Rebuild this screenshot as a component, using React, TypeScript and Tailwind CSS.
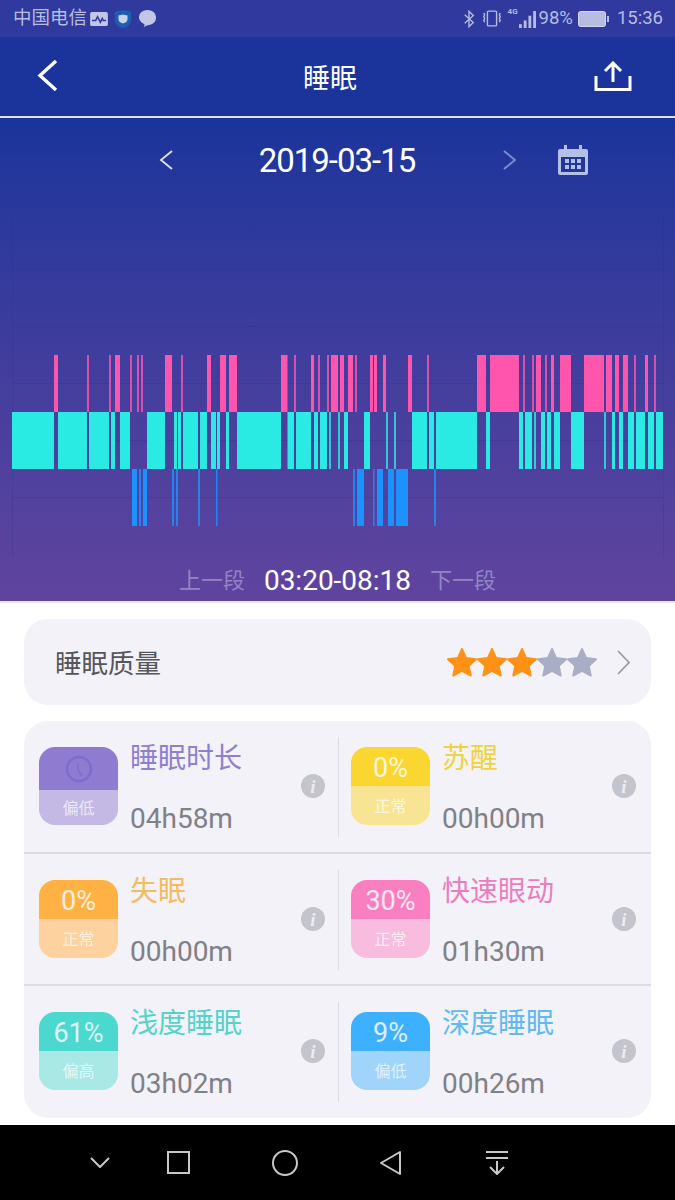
const cjk = "font-['Roboto','Noto_Sans_CJK_SC',sans-serif]";

// [start, end] in page pixels
const remBars = [[54, 58], [87, 89], [109, 111], [115, 120], [130, 132], [137, 139], [141, 143], [165, 172], [181, 183], [207, 211], [220, 226], [229, 237], [281, 287.5], [294, 296], [311, 314], [318, 320], [327, 329], [331, 338], [340, 344], [348, 353], [355, 357], [370, 373], [374, 377], [383, 386], [408, 412], [427, 429], [477, 486], [490, 519], [523, 525], [532, 534], [536, 541], [545, 547], [551, 554], [560, 571], [584, 604], [606, 612], [615, 619], [623, 628], [634, 636], [645, 648], [654, 656]];
const lightBars = [[12, 54], [58, 87], [89, 109], [111, 115], [120, 130], [147, 165], [174, 177], [178, 181], [183, 198], [200, 207], [211, 216], [217, 220], [226, 229], [237, 281], [287.5, 294], [296, 311], [314, 318], [320, 327], [329, 331], [338, 340], [344, 348], [364, 370], [386, 388], [394, 396], [412, 427], [429, 434], [436, 477], [486, 490], [519, 523], [525, 532], [534, 536], [541, 545], [547, 551], [554, 560], [571, 584], [604, 606], [612, 615], [619, 623], [628, 634], [636, 645], [648, 654], [656, 663]];
const deepBars = [[132, 137], [139, 141], [143, 147], [172, 174], [176, 178], [198, 200], [216, 217.5], [353, 355], [357, 364], [373, 374.5], [377, 383], [388, 394], [396, 408], [434, 436]];

type Stat = {
  title: string;
  value: string;
  tag: string;
  pct?: string;
  top: string;
  bottom: string;
  text: string;
};

const stats: Stat[][] = [
  [
    { title: "睡眠时长", value: "04h58m", tag: "偏低", top: "bg-[#8f7bcf] h-[43px]", bottom: "bg-[#c4b9e5]", text: "text-[#8f7fd0]" },
    { title: "苏醒", value: "00h00m", pct: "0%", tag: "正常", top: "bg-[#fbd530] h-[39px]", bottom: "bg-[#f8e594]", text: "text-[#f0d240]" },
  ],
  [
    { title: "失眠", value: "00h00m", pct: "0%", tag: "正常", top: "bg-[#ffb144] h-[39px]", bottom: "bg-[#fdd29e]", text: "text-[#f5bb5e]" },
    { title: "快速眼动", value: "01h30m", pct: "30%", tag: "正常", top: "bg-[#f97fc0] h-[39px]", bottom: "bg-[#f8bcdf]", text: "text-[#ec7cc0]" },
  ],
  [
    { title: "浅度睡眠", value: "03h02m", pct: "61%", tag: "偏高", top: "bg-[#4bd8cf] h-[39px]", bottom: "bg-[#a8e9e6]", text: "text-[#55d2cb]" },
    { title: "深度睡眠", value: "00h26m", pct: "9%", tag: "偏低", top: "bg-[#3db0ff] h-[39px]", bottom: "bg-[#a0d4fb]", text: "text-[#62b8f0]" },
  ],
];

function SleepChart() {
  const thin = (a: number, b: number) => (b - a <= 2 ? 0.8 : 1);
  return (
    <svg width="675" height="345" viewBox="0 215 675 345" className="block">
      {[269, 326, 383, 440, 497].map((y) => (
        <line key={y} x1="12" x2="663" y1={y + 0.5} y2={y + 0.5} stroke="#1a2a8a" strokeOpacity="0.16" />
      ))}
      <line x1="12.5" x2="12.5" y1="215" y2="558" stroke="#1a2a8a" strokeOpacity="0.16" />
      <line x1="663.5" x2="663.5" y1="215" y2="558" stroke="#1a2a8a" strokeOpacity="0.16" />
      {remBars.map(([a, b]) => (
        <rect key={a} x={a} y="355" width={b - a} height="57" fill="#ff55ac" fillOpacity={thin(a, b)} />
      ))}
      {lightBars.map(([a, b]) => (
        <rect key={a} x={a} y="412" width={b - a} height="57" fill="#2aebe3" fillOpacity={thin(a, b)} />
      ))}
      {deepBars.map(([a, b]) => (
        <rect key={a} x={a} y="469" width={b - a} height="57" fill="#1b93ff" fillOpacity={thin(a, b)} />
      ))}
    </svg>
  );
}

function Star({ on }: { on: boolean }) {
  const color = on ? "#ff9116" : "#a9adc5";
  return (
    <svg width="30" height="29" viewBox="0.6 0.8 22.8 22" className="shrink-0">
      <path
        d="M12 1.5l3.2 6.9 7.5.9-5.5 5.1 1.5 7.4L12 18.2l-6.7 3.6 1.5-7.4L1.3 9.3l7.5-.9z"
        fill={color}
        stroke={color}
        strokeWidth="1.4"
        strokeLinejoin="round"
      />
    </svg>
  );
}

function StatCell({ item, first }: { item: Stat; first: boolean }) {
  return (
    <div className={`relative flex items-start h-[100px] mt-[16px] pt-[10px] ${first ? "w-[314px] pl-[15px]" : "flex-1 pl-[12px] border-l border-[#dcdce2]"}`}>
      <div className="w-[79px] h-[78px] rounded-[16px] overflow-hidden flex flex-col shrink-0">
        <div className={`${item.top} ${item.pct ? "pt-[4px]" : ""} flex items-center justify-center text-white/80 text-[27px] leading-none`}>
          {item.pct ?? (
            <svg width="28" height="28" viewBox="0 0 28 28" fill="none" stroke="#7a6fd0" strokeWidth="2.5">
              <circle cx="14" cy="14" r="12" />
              <path d="M13 8v7l4 6" strokeWidth="1.5" />
            </svg>
          )}
        </div>
        <div className={`${item.bottom} flex-1 pt-[2px] flex items-center justify-center text-white/70 text-[16px] leading-none`}>
          {item.tag}
        </div>
      </div>
      <div className="ml-[12px] -mt-[3px] flex flex-col">
        <div className={`${item.text} text-[28px] leading-[30px] whitespace-nowrap`}>{item.title}</div>
        <div className="text-[#808088] text-[28px] leading-[32px] mt-[29px]">{item.value}</div>
      </div>
      <div className={`absolute top-[37px] w-[24px] h-[24px] rounded-full bg-[#c4c4cc] flex items-center justify-center text-white/70 text-[19px] italic font-bold font-['Liberation_Serif',serif] leading-none ${first ? "right-[13px]" : "right-[15px]"}`}>
        i
      </div>
    </div>
  );
}

export default function App() {
  return (
    <div className={`w-[675px] h-[1200px] flex flex-col overflow-hidden bg-white ${cjk}`}>
      {/* Status bar */}
      <div className="h-[37px] bg-[#303a9e] flex items-center justify-between pl-[13px] pr-[12px] text-[#b7bce0] text-[18.5px] leading-none">
        <div className="flex items-center">
          <span>中国电信</span>
          <svg width="18" height="14" viewBox="0 0 19 15" className="ml-[3px]">
            <rect width="19" height="15" rx="2" fill="#c3c7e6" />
            <path d="M2 9h4l2-4 3 6 2-4 1 2h3" fill="none" stroke="#303a9e" strokeWidth="1.6" />
          </svg>
          <svg width="18" height="20" viewBox="0 0 20 22" className="ml-[6px]">
            <path d="M10 1l9 2v9c0 5-4 8-9 9-5-1-9-4-9-9V3z" fill="#1a5fb0" />
            <path d="M10 6l5 1v4c0 3-2 4-5 5-3-1-5-2-5-5V7z" fill="#c9d2ea" />
          </svg>
          <svg width="19" height="19" viewBox="0 0 20 20" className="ml-[6px]">
            <path d="M10 1c5 0 9 3 9 8s-4 8-9 8l-4 2 1-3c-3-1-6-4-6-7 0-5 4-8 9-8z" fill="#c3c7e6" />
          </svg>
        </div>
        <div className="flex items-center">
          <svg width="12" height="18" viewBox="0 0 14 20" fill="none" stroke="#b7bce0" strokeWidth="1.6">
            <path d="M2 5l10 9-5 5V1l5 5-10 9" />
          </svg>
          <svg width="22" height="19" viewBox="0 0 24 20" fill="none" stroke="#b7bce0" strokeWidth="1.5" className="ml-[6px]">
            <rect x="7" y="2" width="10" height="16" rx="1" />
            <path d="M3 4l1 2-1 2 1 2-1 2 1 2M21 4l-1 2 1 2-1 2 1 2-1 2" />
          </svg>
          <div className="relative w-[28px] h-[20px] ml-[5px]">
            <span className="absolute left-0 top-[-1px] text-[8px] font-bold">4G</span>
            <svg width="17" height="17" viewBox="0 0 18 18" className="absolute right-0 top-[2px]" fill="#b7bce0">
              <rect x="0" y="14" width="3" height="4" />
              <rect x="5" y="10" width="3" height="8" />
              <rect x="10" y="5" width="3" height="13" />
              <rect x="15" y="0" width="3" height="18" />
            </svg>
          </div>
          <span className="ml-[3px]">98%</span>
          <svg width="32" height="16" viewBox="0 0 32 16" className="ml-[5px]">
            <rect x="0.5" y="0.5" width="27" height="15" rx="2" fill="#b7bce0" stroke="#d5d8ee" />
            <rect x="29" y="5" width="2" height="6" fill="#b7bce0" />
          </svg>
          <span className="ml-[7px]">15:36</span>
        </div>
      </div>

      {/* Title bar */}
      <div className="h-[81px] bg-[#1a349b] border-b-2 border-[#dfe3f3] flex items-center pl-[36px] text-white">
        <svg width="22" height="33" viewBox="0 0 22 33" fill="none" stroke="currentColor" strokeWidth="3.4" className="-mt-[2px]">
          <path d="M20 2L4 16.5 20 31" />
        </svg>
        <span className="text-[27px] leading-none ml-[245px] mt-[5px]">睡眠</span>
        <svg width="38" height="30" viewBox="0 0 38 30" fill="none" stroke="currentColor" strokeWidth="3" className="ml-[237px] mt-[-1px]">
          <path d="M2 15v13.5h34V15M19 21V3M11 10l8-8 8 8" />
        </svg>
      </div>

      {/* Chart panel */}
      <div className="h-[483px] bg-gradient-to-b from-[#1a349b] to-[#60449f] flex flex-col">
        <div className="h-[97px] pb-[13px] flex items-center text-white pl-[159px]">
          <svg width="14" height="20" viewBox="0 0 14 20" fill="none" stroke="#dfe3f3" strokeWidth="1.8">
            <path d="M13 1L2 10l11 9" />
          </svg>
          <span className="text-[33px] leading-none ml-[85px] w-[158px] text-center tracking-[-1px] whitespace-nowrap">2019-03-15</span>
          <svg width="14" height="20" viewBox="0 0 14 20" fill="none" stroke="#7f8fd0" strokeWidth="1.8" className="ml-[87px]">
            <path d="M1 1l11 9-11 9" />
          </svg>
          <svg width="32" height="30" viewBox="0 0 32 30" className="ml-[40px]" fill="#b5c0e6">
            <path fillRule="evenodd" d="M3 4h4V0h3v4h12V0h3v4h4a2 2 0 0 1 2 2v22a2 2 0 0 1-2 2H3a2 2 0 0 1-2-2V6a2 2 0 0 1 2-2zm1 8v15h24V12z" />
            <rect x="8" y="14" width="4" height="4" />
            <rect x="14" y="14" width="4" height="4" />
            <rect x="20" y="14" width="4" height="4" />
            <rect x="8" y="20" width="4" height="4" />
            <rect x="14" y="20" width="4" height="4" />
            <rect x="20" y="20" width="4" height="4" />
          </svg>
        </div>
        <SleepChart />
        <div className="flex items-center justify-center mt-[7px] text-[22px] leading-none text-[#9186c2]">
          <span>上一段</span>
          <span className="text-white text-[28px] mx-[19px]">03:20-08:18</span>
          <span>下一段</span>
        </div>
      </div>

      {/* Detail cards */}
      <div className="flex-1 border-t-2 border-[#ece6f6] pt-[16px] px-[24px]">
        <div className="h-[86px] rounded-[24px] bg-[#f2f2f8] flex items-center pl-[31px] pr-[21px]">
          <span className="text-[#55555c] text-[26.5px] leading-none flex-1 pt-[5px]">睡眠质量</span>
          <Star on />
          <Star on />
          <Star on />
          <Star on={false} />
          <Star on={false} />
          <svg width="13" height="25" viewBox="0 0 13 25" fill="none" stroke="#9a9aa2" strokeWidth="1.7" className="ml-[20px]">
            <path d="M1 1l11 11.5L1 24" />
          </svg>
        </div>
        <div className="mt-[16px] h-[397px] rounded-[24px] bg-[#f2f2f8] flex flex-col">
          {stats.map((row, i) => (
            <div key={i} className={`flex ${i === 0 ? "h-[134px]" : "h-[133px]"} ${i < 2 ? "border-b-2 border-[#dcdce4]" : ""}`}>
              <StatCell item={row[0]} first />
              <StatCell item={row[1]} first={false} />
            </div>
          ))}
        </div>
      </div>

      {/* Navigation bar */}
      <div className="h-[75px] bg-black flex items-center pl-[90px] text-[#c8c8c8]">
        <svg width="20" height="11" viewBox="0 0 20 11" fill="none" stroke="currentColor" strokeWidth="2">
          <path d="M1 1l9 9 9-9" />
        </svg>
        <svg width="23" height="23" viewBox="0 0 23 23" fill="none" stroke="currentColor" strokeWidth="2" className="ml-[57px]">
          <rect x="1" y="1" width="21" height="21" />
        </svg>
        <svg width="26" height="26" viewBox="0 0 26 26" fill="none" stroke="currentColor" strokeWidth="2" className="ml-[82px]">
          <circle cx="13" cy="13" r="12" />
        </svg>
        <svg width="23" height="26" viewBox="0 0 23 26" fill="none" stroke="currentColor" strokeWidth="2" strokeLinejoin="round" className="ml-[81px]">
          <path d="M21 2v22L2 13z" />
        </svg>
        <svg width="22" height="24" viewBox="0 0 22 24" fill="none" stroke="currentColor" strokeWidth="2" className="ml-[84px]">
          <path d="M0 1h22M0 7h22M11 10v13M4 16l7 7 7-7" />
        </svg>
      </div>
    </div>
  );
}
